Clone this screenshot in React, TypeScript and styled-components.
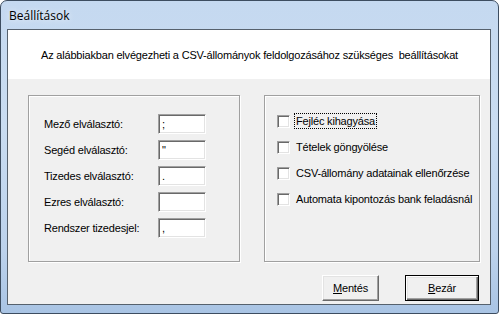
import styled, { createGlobalStyle } from "styled-components";

const GlobalStyle = createGlobalStyle`
  html, body {
    margin: 0;
    padding: 0;
    background: #ffffff;
  }
  * {
    box-sizing: border-box;
  }
`;

const fields = [
  { label: "Mező elválasztó:", value: ";" },
  { label: "Segéd elválasztó:", value: '"' },
  { label: "Tizedes elválasztó:", value: "." },
  { label: "Ezres elválasztó:", value: "" },
  { label: "Rendszer tizedesjel:", value: "," },
];

const options = [
  { label: "Fejléc kihagyása", focused: true },
  { label: "Tételek göngyölése", focused: false },
  { label: "CSV-állomány adatainak ellenőrzése", focused: false },
  { label: "Automata kipontozás bank feladásnál", focused: false },
];

const App = () => {
  return (
    <>
      <GlobalStyle />
      <Window>
        <TitleBar>Beállítások</TitleBar>
        <Client>
          <Header>
            Az alábbiakban elvégezheti a CSV-állományok feldolgozásához szükséges&nbsp; beállításokat
          </Header>
          <Panels>
            <GroupBox $width={212}>
              <FieldGrid>
                {fields.map((f) => (
                  <FieldRow key={f.label}>
                    <Label>{f.label}</Label>
                    <TextBox>{f.value}</TextBox>
                  </FieldRow>
                ))}
              </FieldGrid>
            </GroupBox>
            <GroupBox $width={216}>
              <CheckList>
                {options.map((o) => (
                  <CheckRow key={o.label}>
                    <CheckBox />
                    <CheckLabel $focused={o.focused}>{o.label}</CheckLabel>
                  </CheckRow>
                ))}
              </CheckList>
            </GroupBox>
          </Panels>
          <ButtonBar>
            <Button $width={57}>
              <u>M</u>entés
            </Button>
            <Button $width={74} $default>
              <u>B</u>ezár
            </Button>
          </ButtonBar>
        </Client>
      </Window>
    </>
  );
};

const Window = styled.div`
  width: 499px;
  height: 314px;
  border: 1px solid #3d4d60;
  border-radius: 7px 7px 3px 3px;
  background: linear-gradient(
    180deg,
    #c5d9f0 0%,
    #c9dcf1 40%,
    #bcd2ec 80%,
    #a9c4e4 100%
  );
  padding: 0 7px 8px 6px;
  display: flex;
  flex-direction: column;
`;

const TitleBar = styled.div`
  height: 28px;
  padding: 6px 0 0 2px;
  font-family: "Open Sans", "Noto Sans", sans-serif;
  font-size: 12px;
  color: #000000;
  text-shadow: 0 0 6px rgba(255, 255, 255, 0.9);
`;

const Client = styled.div`
  flex: 1;
  border: 1px solid #56616d;
  background: #f0f0f0;
  display: flex;
  flex-direction: column;
  font-family: "Liberation Sans", Arial, sans-serif;
  font-size: 11px;
  letter-spacing: -0.19px;
  color: #000000;
`;

const Header = styled.div`
  height: 49px;
  background: #ffffff;
  padding: 0 0 0 33px;
  display: flex;
  align-items: center;
  white-space: nowrap;
`;

const Panels = styled.div`
  display: flex;
  gap: 24px;
  margin: 16px 10px 0 20px;
  height: 167px;
`;

const GroupBox = styled.div<{ $width: number }>`
  width: ${(p) => p.$width}px;
  height: 100%;
  border: 1px solid #a0a0a0;
  box-shadow: inset 1px 1px 0 #ffffff, 1px 1px 0 #ffffff;
`;

const FieldGrid = styled.div`
  display: flex;
  flex-direction: column;
  gap: 6px;
  padding: 18px 0 0 15px;
`;

const FieldRow = styled.div`
  display: flex;
  align-items: center;
  height: 20px;
`;

const Label = styled.span`
  width: 114px;
`;

const TextBox = styled.div`
  width: 48px;
  height: 20px;
  background: #ffffff;
  border: 1px solid;
  border-color: #a0a0a0 #ffffff #ffffff #a0a0a0;
  box-shadow: inset 1px 1px 0 #696969, inset -1px -1px 0 #e3e3e3;
  padding: 3px 0 0 3px;
  line-height: 13px;
`;

const CheckList = styled.div`
  display: flex;
  flex-direction: column;
  gap: 10px;
  padding: 17px 0 0 12px;
`;

const CheckRow = styled.div`
  display: flex;
  align-items: center;
  height: 16px;
`;

const CheckBox = styled.span`
  width: 13px;
  height: 13px;
  background: #ffffff;
  border: 1px solid;
  border-color: #a0a0a0 #ffffff #ffffff #a0a0a0;
  box-shadow: inset 1px 1px 0 #696969, inset -1px -1px 0 #e3e3e3;
  margin-right: 4px;
`;

const CheckLabel = styled.span<{ $focused: boolean }>`
  padding: 1px 1px;
  border: 1px dotted ${(p) => (p.$focused ? "#000000" : "transparent")};
  white-space: nowrap;
`;

const ButtonBar = styled.div`
  display: flex;
  justify-content: flex-end;
  gap: 26px;
  margin: 13px 11px 0 0;
`;

const Button = styled.div<{ $width: number; $default?: boolean }>`
  width: ${(p) => p.$width}px;
  height: 26px;
  display: flex;
  align-items: center;
  justify-content: center;
  background: #f0f0f0;
  border: 1px solid;
  border-color: ${(p) =>
    p.$default ? "#000000" : "#ffffff #696969 #696969 #ffffff"};
  box-shadow: ${(p) =>
    p.$default
      ? "inset 1px 1px 0 #ffffff, inset -1px -1px 0 #696969, inset -2px -2px 0 #a0a0a0, inset 2px 2px 0 #e3e3e3"
      : "inset -1px -1px 0 #a0a0a0, inset 1px 1px 0 #e3e3e3"};
`;

export default App;
